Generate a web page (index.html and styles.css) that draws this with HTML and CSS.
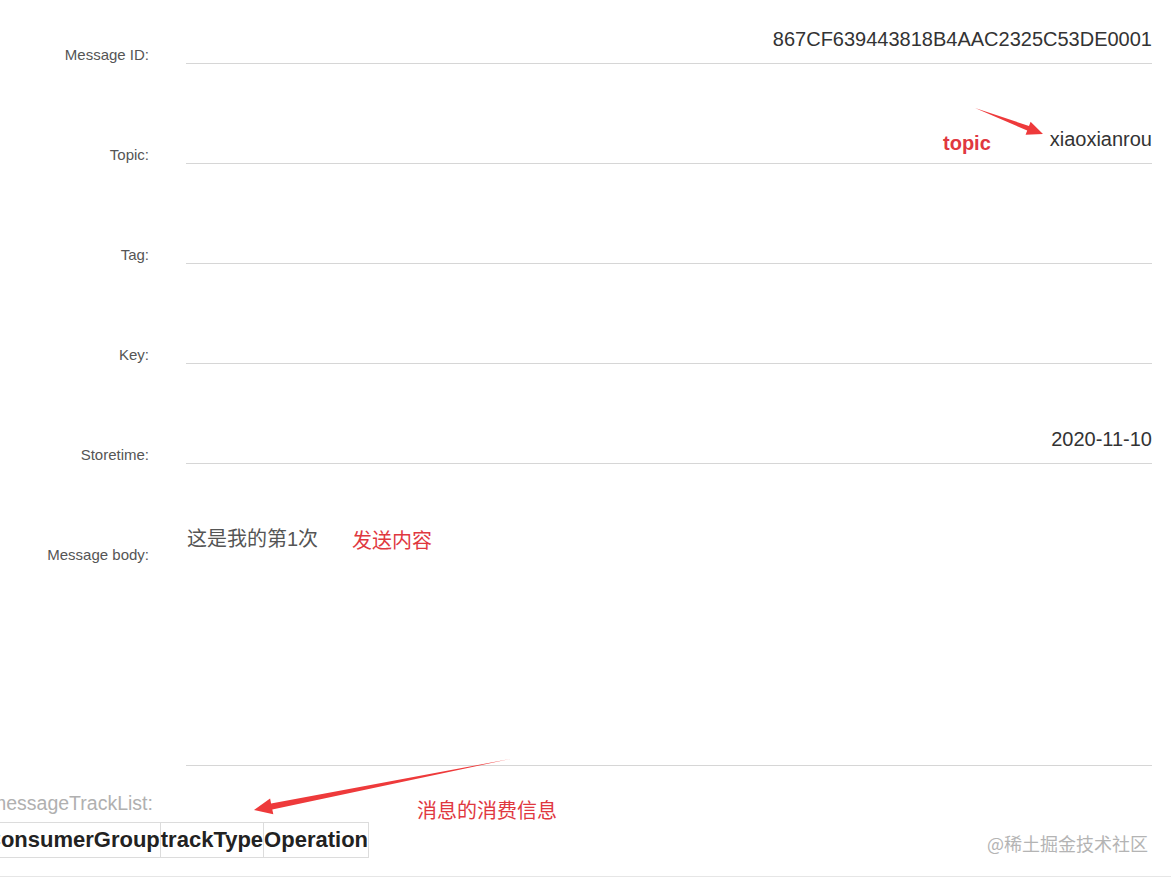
FILE: index.html
```html
<!DOCTYPE html>
<html lang="zh-CN">
<head>
  <meta charset="UTF-8" />
  <meta name="viewport" content="width=device-width, initial-scale=1.0" />
  <title>Message Detail</title>
  <link rel="stylesheet" href="styles.css">
</head>
<body>
  <div class="page">
    <div class="form">
      <div class="form-row">
        <label class="form-label">Message ID:</label>
        <div class="form-value">867CF639443818B4AAC2325C53DE0001</div>
      </div>
      <div class="form-row">
        <label class="form-label">Topic:</label>
        <div class="form-value">xiaoxianrou</div>
      </div>
      <div class="form-row">
        <label class="form-label">Tag:</label>
        <div class="form-value"></div>
      </div>
      <div class="form-row">
        <label class="form-label">Key:</label>
        <div class="form-value"></div>
      </div>
      <div class="form-row">
        <label class="form-label">Storetime:</label>
        <div class="form-value">2020-11-10</div>
      </div>
      <div class="form-row form-row-body">
        <label class="form-label">Message body:</label>
        <div class="form-value form-value-body">这是我的第1次</div>
      </div>
    </div>

    <div class="track">
      <div class="track-label">messageTrackList:</div>
      <table class="track-table">
        <thead>
          <tr>
            <th>ConsumerGroup</th>
            <th>trackType</th>
            <th>Operation</th>
          </tr>
        </thead>
      </table>
    </div>

    <div class="footer"></div>

    <!-- annotations drawn over the screenshot -->
    <svg class="arrows" width="1171" height="878" viewBox="0 0 1171 878">
      <polygon points="975,108 1027.2,130.6 1025.6,134.8 1043,134 1030.6,121.8 1029,126" />
      <polygon points="510,759 272.3,809.4 273.3,814.3 254,810 270.1,798.6 271.1,803.6" />
    </svg>
    <span class="note note-topic">topic</span>
    <span class="note note-body">发送内容</span>
    <span class="note note-track">消息的消费信息</span>
    <span class="watermark">@稀土掘金技术社区</span>
  </div>
</body>
</html>
```

FILE: styles.css
```css
body {
  margin: 0;
  font-family: "Liberation Sans", Arial, "Noto Sans CJK SC", sans-serif;
  background: #fff;
  overflow: hidden;
}

.page {
  position: relative;
  width: 1171px;
  height: 878px;
  overflow: hidden;
}

.form {
  display: flex;
  flex-direction: column;
}

.form-row {
  display: grid;
  grid-template-columns: 149px 966px;
  column-gap: 37px;
  height: 100px;
}

.form-row-body {
  height: 266px;
}

.form-label {
  padding-top: 46px;
  font-size: 15px;
  line-height: 17px;
  color: #555;
  text-align: right;
}

.form-value {
  box-sizing: border-box;
  height: 64px;
  padding-top: 28px;
  border-bottom: 1px solid #d6d6d6;
  font-size: 20px;
  line-height: 23px;
  color: #333;
  text-align: right;
}

.form-value-body {
  height: 266px;
  padding-left: 1px;
  text-align: left;
  color: #555;
}

.track {
  margin-top: 27px;
}

.track-label {
  margin-left: -10px;
  font-size: 19.5px;
  line-height: 21px;
  color: #b0b0b0;
}

.track-table {
  margin-top: 8px;
  margin-left: -16px;
  border-collapse: collapse;
}

.track-table th {
  border: 1px solid #dcdcdc;
  padding: 5px 0;
  font-size: 22px;
  line-height: 24px;
  font-weight: bold;
  color: #222;
  text-align: left;
}

.footer {
  margin-top: 18px;
  border-top: 1px solid #e6e6e6;
}

.arrows {
  position: absolute;
  left: 0;
  top: 0;
  fill: #ee3a3b;
}

.note {
  position: absolute;
  color: #e0383f;
  font-size: 20px;
  line-height: 24px;
  font-family: "Noto Sans CJK SC", "Liberation Sans", sans-serif;
  white-space: nowrap;
}

.note-topic {
  left: 943px;
  top: 131px;
  font-family: "Liberation Sans", Arial, sans-serif;
  font-weight: bold;
}

.note-body {
  left: 352px;
  top: 528px;
}

.note-track {
  left: 417px;
  top: 798px;
}

.watermark {
  position: absolute;
  left: 987px;
  top: 831px;
  font-size: 18px;
  line-height: 24px;
  color: #b4b4b4;
  font-family: "Noto Sans CJK SC", "Liberation Sans", sans-serif;
  white-space: nowrap;
}
```
